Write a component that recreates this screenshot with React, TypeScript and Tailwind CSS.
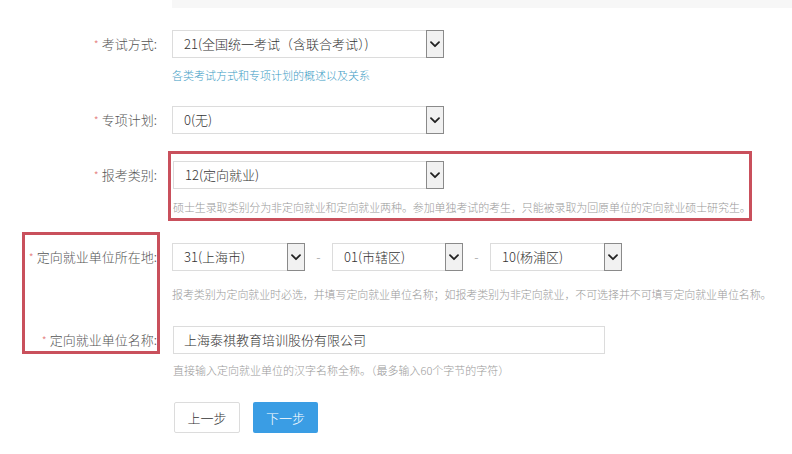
import type { ReactNode } from "react";

function Chevron() {
  return (
    <svg width="10" height="7" viewBox="0 0 10 7" fill="none">
      <path d="M1 1.2 L5 5.2 L9 1.2" stroke="#222" strokeWidth="1.8" strokeLinecap="round" strokeLinejoin="round" />
    </svg>
  );
}

function FakeSelect({ value, width }: { value: string; width: string }) {
  return (
    <div className={`flex h-[28px] items-stretch border border-[#dcdcdc] bg-white ${width}`}>
      <div className="flex flex-1 items-center pl-[11px] text-[13px] text-[#333]">{value}</div>
      <div className="flex w-[18px] items-center justify-center border border-[#8a8a8a] bg-[#f1f1f1] -my-px -mr-px">
        <Chevron />
      </div>
    </div>
  );
}

function Row({ label, children, className = "" }: { label: string; children: ReactNode; className?: string }) {
  return (
    <div className={`flex items-start ${className}`}>
      <div className="w-[157px] shrink-0 text-right text-[13px] leading-[28px] text-[#555]">
        <span className="mr-[3px] text-[11px] text-[#e58080]">*</span>
        {label}
      </div>
      <div className="ml-[15px] flex flex-col">{children}</div>
    </div>
  );
}

export default function App() {
  return (
    <div
      className="relative h-[454px] w-[792px] overflow-hidden bg-white font-light"
      style={{ fontFamily: '"Noto Sans CJK SC", "Noto Sans", sans-serif' }}
    >
      <div className="ml-[172px] h-[8px] bg-[#f7f7f7]" />

      <Row label="考试方式:" className="mt-[22px]">
        <FakeSelect value="21(全国统一考试（含联合考试）)" width="w-[272px]" />
        <div className="mt-[9px] text-[11px] leading-[16px] text-[#3b9bc4]">各类考试方式和专项计划的概述以及关系</div>
      </Row>

      <Row label="专项计划:" className="mt-[23px]">
        <FakeSelect value="0(无)" width="w-[272px]" />
      </Row>

      <Row label="报考类别:" className="mt-[27px]">
        <div className="pl-px">
          <FakeSelect value="12(定向就业)" width="w-[271px]" />
        </div>
        <div className="mt-[10px] pl-px text-[11px] leading-[16px] tracking-[-0.1px] whitespace-nowrap text-[#999]">
          硕士生录取类别分为非定向就业和定向就业两种。参加单独考试的考生，只能被录取为回原单位的定向就业硕士研究生。
        </div>
      </Row>

      <Row label="定向就业单位所在地:" className="mt-[28px]">
        <div className="flex items-center">
          <FakeSelect value="31(上海市)" width="w-[133px]" />
          <span className="w-[27px] text-center text-[13px] text-[#999]">-</span>
          <FakeSelect value="01(市辖区)" width="w-[131px]" />
          <span className="w-[27px] text-center text-[13px] text-[#999]">-</span>
          <FakeSelect value="10(杨浦区)" width="w-[132px]" />
        </div>
        <div className="mt-[15px] text-[11px] leading-[16px] tracking-[-0.1px] whitespace-nowrap text-[#999]">
          报考类别为定向就业时必选，并填写定向就业单位名称；如报考类别为非定向就业，不可选择并不可填写定向就业单位名称。
        </div>
      </Row>

      <Row label="定向就业单位名称:" className="mt-[24px]">
        <div className="pl-px">
          <div className="flex h-[28px] w-[432px] items-center border border-[#dcdcdc] bg-white pl-[10px] text-[13px] text-[#333]">
            上海泰祺教育培训股份有限公司
          </div>
        </div>
        <div className="mt-[8px] pl-px text-[11px] leading-[16px] text-[#999]">
          直接输入定向就业单位的汉字名称全称。（最多输入60个字节的字符）
        </div>
      </Row>

      <div className="ml-[174px] mt-[24px] flex gap-[13px]">
        <button type="button" className="h-[31px] w-[66px] rounded-[2px] border border-[#dcdcdc] bg-white text-[13px] text-[#333]">
          上一步
        </button>
        <button type="button" className="h-[31px] w-[65px] rounded-[2px] bg-[#3a9de4] text-[13px] text-white">
          下一步
        </button>
      </div>

      <div className="pointer-events-none absolute left-[168px] top-[151px] h-[70px] w-[584px] border-[3px] border-[#c9505c]" />
      <div className="pointer-events-none absolute left-[22px] top-[232px] h-[122px] w-[138px] border-[3px] border-[#c9505c]" />
    </div>
  );
}
